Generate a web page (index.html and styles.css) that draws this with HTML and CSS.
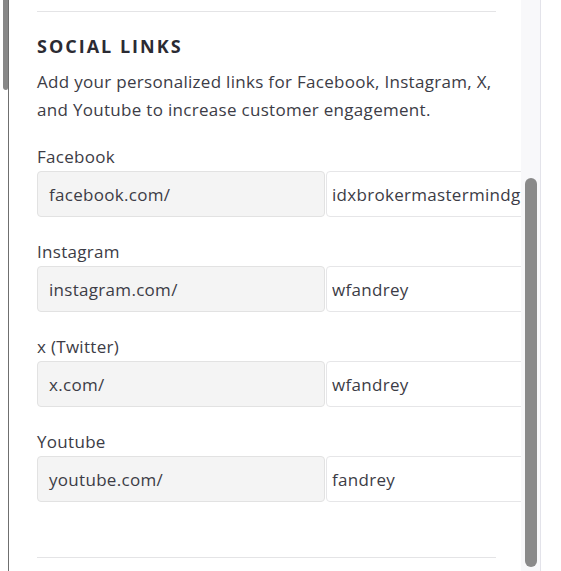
FILE: index.html
```html
<!DOCTYPE html>
<html lang="en">
<head>
    <meta charset="UTF-8">
    <meta name="viewport" content="width=device-width, initial-scale=1.0">
    <title>Social Links</title>
    <link rel="stylesheet" href="styles.css">
</head>
<body>
    <div class="page">
        <div class="side-rail">
            <div class="rail-thumb"></div>
        </div>

        <div class="panel">
            <div class="panel-body">
                <hr class="divider">

                <section class="social">
                    <h2 class="section-title">SOCIAL LINKS</h2>
                    <p class="section-desc">Add your personalized links for Facebook, Instagram, X, and Youtube to increase customer engagement.</p>

                    <div class="field">
                        <label for="facebook">Facebook</label>
                        <div class="input-group">
                            <span class="prefix">facebook.com/</span>
                            <input type="text" id="facebook" value="idxbrokermastermindgroup">
                        </div>
                    </div>

                    <div class="field">
                        <label for="instagram">Instagram</label>
                        <div class="input-group">
                            <span class="prefix">instagram.com/</span>
                            <input type="text" id="instagram" value="wfandrey">
                        </div>
                    </div>

                    <div class="field">
                        <label for="twitter">x (Twitter)</label>
                        <div class="input-group">
                            <span class="prefix">x.com/</span>
                            <input type="text" id="twitter" value="wfandrey">
                        </div>
                    </div>

                    <div class="field">
                        <label for="youtube">Youtube</label>
                        <div class="input-group">
                            <span class="prefix">youtube.com/</span>
                            <input type="text" id="youtube" value="fandrey">
                        </div>
                    </div>
                </section>

                <hr class="divider">
            </div>

            <div class="scroll-track">
                <div class="scroll-thumb"></div>
            </div>
        </div>
    </div>
</body>
</html>
```

FILE: styles.css
```css
* {
    margin: 0;
    padding: 0;
    box-sizing: border-box;
}

body {
    font-family: 'Open Sans', 'Lato', sans-serif;
    background: #fff;
    color: #3c3c46;
    letter-spacing: 0.3px;
    height: 571px;
    overflow: hidden;
}

.page {
    display: flex;
    height: 100%;
}

/* leftover scrollbar of the list behind the panel */
.side-rail {
    width: 8px;
    padding-left: 3px;
    flex-shrink: 0;
}

.rail-thumb {
    height: 90px;
    background: #888;
    border-radius: 0 0 2px 3px;
}

.panel {
    display: flex;
    width: 533px;
    height: 100%;
    border-left: 1px solid #6f6f6f;
    border-right: 1px solid #e3e3ea;
}

.panel-body {
    width: 512px;
    flex-shrink: 0;
    overflow: hidden;
    padding: 11px 25px 0 28px;
}

.divider {
    border: none;
    border-top: 1px solid #e4e4e6;
}

.social {
    padding: 23px 0 55px;
}

.section-title {
    font-size: 18px;
    font-weight: 700;
    letter-spacing: 2px;
    line-height: 22px;
    color: #2b2b33;
}

.section-desc {
    font-size: 17px;
    line-height: 28px;
    margin-top: 11px;
    margin-bottom: 22px;
}

.field {
    margin-bottom: 24px;
}

.field:last-child {
    margin-bottom: 0;
}

.field label {
    display: block;
    font-size: 17px;
    line-height: 22px;
    margin-bottom: 3px;
}

.input-group {
    display: flex;
    width: 520px;
    height: 46px;
}

.prefix {
    width: 288px;
    flex-shrink: 0;
    display: flex;
    align-items: center;
    padding-left: 11px;
    font-size: 17px;
    background: #f4f4f4;
    border: 1px solid #e2e2e2;
    border-radius: 4px;
}

.input-group input {
    flex: 1;
    min-width: 0;
    margin-left: 1px;
    padding-left: 5px;
    font-family: inherit;
    font-size: 17px;
    letter-spacing: inherit;
    color: #3c3c46;
    background: #fff;
    border: 1px solid #e6e6e8;
    border-radius: 4px;
    outline: none;
}

.scroll-track {
    width: 19px;
    flex-shrink: 0;
    background: #f8f8fa;
    padding: 178px 3px 4px 4px;
}

.scroll-thumb {
    height: 389px;
    background: #8a8a8a;
    border-radius: 6px;
}
```
